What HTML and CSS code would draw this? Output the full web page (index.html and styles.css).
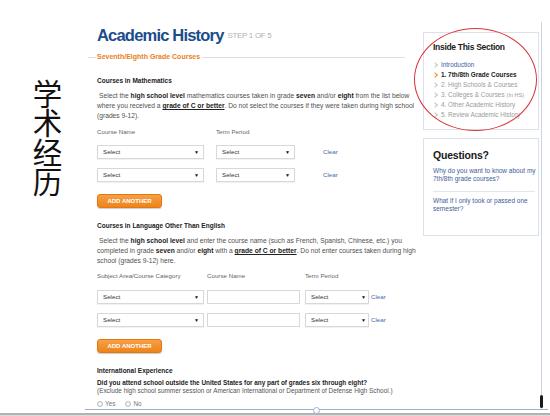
FILE: index.html
```html
<!DOCTYPE html>
<html>
<head>
<meta charset="utf-8">
<title>Academic History</title>
<link rel="stylesheet" href="styles.css">
</head>
<body>
<div class="slide">
  <div class="stage">
    <div class="cn"><span class="cn-text">学术经历</span></div>
    <div class="screen">
      <main class="main">
        <h1 class="title">Academic History <span class="step">STEP 1 OF 5</span></h1>
        <div class="sec-head"><span>Seventh/Eighth Grade Courses</span></div>

        <h2 class="h">Courses in Mathematics</h2>
        <p class="para">Select the <b>high school level</b> mathematics courses taken in grade <b>seven</b> and/or <b>eight</b> from the list below<br>where you received a <b class="u">grade of C or better</b>. Do not select the courses if they were taken during high school<br>(grades 9-12).</p>
        <div class="grid math labels"><span>Course Name</span><span>Term Period</span></div>
        <div class="grid math row">
          <div class="sel s-course">Select<i>▼</i></div>
          <div class="sel s-term">Select<i>▼</i></div>
          <a class="clear">Clear</a>
        </div>
        <div class="grid math row">
          <div class="sel s-course">Select<i>▼</i></div>
          <div class="sel s-term">Select<i>▼</i></div>
          <a class="clear">Clear</a>
        </div>
        <div class="btn">ADD ANOTHER</div>

        <h2 class="h h2">Courses in Language Other Than English</h2>
        <p class="para">Select the <b>high school level</b> and enter the course name (such as French, Spanish, Chinese, etc.) you<br>completed in grade <b>seven</b> and/or <b>eight</b> with a <b class="u">grade of C or better</b>. Do not enter courses taken during high<br>school (grades 9-12) here.</p>
        <div class="grid lang labels lang-labels"><span>Subject Area/Course Category</span><span>Course Name</span><span>Term Period</span></div>
        <div class="grid lang row">
          <div class="sel s-subj">Select<i>▼</i></div>
          <div class="input"></div>
          <div class="sel s-lterm">Select<i>▼</i></div>
          <a class="clear">Clear</a>
        </div>
        <div class="grid lang row">
          <div class="sel s-subj">Select<i>▼</i></div>
          <div class="input"></div>
          <div class="sel s-lterm">Select<i>▼</i></div>
          <a class="clear">Clear</a>
        </div>
        <div class="btn">ADD ANOTHER</div>

        <h2 class="h h2">International Experience</h2>
        <p class="q"><b>Did you attend school outside the United States for any part of grades six through eight?</b><br>(Exclude high school summer session or American International or Department of Defense High School.)</p>
        <div class="radios">
          <label class="radio"><span class="dot"></span>Yes</label>
          <label class="radio"><span class="dot"></span>No</label>
        </div>
      </main>

      <aside class="side">
        <div class="box box-nav">
          <h3 class="box-title">Inside This Section</h3>
          <ul class="nav">
            <li class="link">Introduction</li>
            <li class="active">1. 7th/8th Grade Courses</li>
            <li>2. High Schools &amp; Courses</li>
            <li>3. Colleges &amp; Courses <small>(In HS)</small></li>
            <li>4. Other Academic History</li>
            <li>5. Review Academic History</li>
          </ul>
        </div>
        <div class="box box-q">
          <h3 class="box-title q-title">Questions?</h3>
          <a class="qlink first">Why do you want to know about my<br>7th/8th grade courses?</a>
          <div class="sep"></div>
          <a class="qlink">What if I only took or passed one<br>semester?</a>
        </div>
      </aside>
    </div>
  </div>
  <div class="baseline"></div>
  <div class="edge"></div>
  <div class="ring"></div>
</div>
</body>
</html>
```

FILE: styles.css
```css
* { box-sizing: border-box; margin: 0; padding: 0; }

html, body {
  width: 550px;
  height: 416px;
  overflow: hidden;
  background: #fff;
}

body {
  font-family: "Liberation Sans", Arial, sans-serif;
  font-size: 7px;
  line-height: 10px;
  color: #555;
}

.slide {
  position: relative;
  width: 550px;
  height: 416px;
  display: flex;
  flex-direction: column;
}

.stage {
  display: flex;
  height: 409px;
}

/* Chinese vertical caption */
.cn {
  width: 88px;
  padding: 79px 0 0 7px;
  display: flex;
  justify-content: center;
  align-items: flex-start;
}

.cn-text {
  writing-mode: vertical-rl;
  font-family: "Noto Sans CJK SC", sans-serif;
  font-size: 29.5px;
  line-height: 32px;
  color: #111;
}

/* screenshot frame */
.screen {
  position: relative;
  margin-top: 22px;
  width: 454px;
  height: 387px;
  border-right: 1px solid #cbd4e4;
  display: flex;
}

.screen::after {
  content: "";
  position: absolute;
  right: -2px;
  bottom: 1px;
  width: 3px;
  height: 13px;
  border-radius: 2px;
  background: #1a1a1a;
}

.main {
  width: 317px;
  padding: 3px 0 0 9px;
}

.title {
  font-size: 16.5px;
  line-height: 20px;
  letter-spacing: -0.8px;
  font-weight: bold;
  color: #1b4c8b;
  white-space: nowrap;
}

.step {
  font-size: 8px;
  letter-spacing: -0.3px;
  font-weight: normal;
  color: #b3b3b3;
  vertical-align: 3px;
}

.sec-head {
  margin: 6px 0 0 -9px;
  height: 10px;
  display: flex;
  align-items: center;
  white-space: nowrap;
}

.sec-head::before,
.sec-head::after {
  content: "";
  height: 1px;
  background: #d9e0ec;
}

.sec-head::before { width: 8px; }
.sec-head::after { flex: 1; }

.sec-head span {
  padding: 0 2px 0 1px;
  font-size: 7px;
  font-weight: bold;
  color: #e8801a;
}

.h {
  margin-top: 14px;
  font-size: 6.5px;
  font-weight: bold;
  color: #222;
}

.h2 { margin-top: 13px; }

.para {
  margin-top: 5px;
  text-indent: 2px;
  font-size: 6.7px;
  color: #505050;
  white-space: nowrap;
}

.para b, .q b { color: #222; }
.u { text-decoration: underline; }

.grid {
  display: grid;
  align-items: center;
}

.math { grid-template-columns: 119px 107px auto; }
.lang { grid-template-columns: 110px 98px 66px auto; }

.labels {
  margin-top: 6px;
  font-size: 6.2px;
  color: #666;
}

.lang-labels { margin-top: 5px; }

.row { margin-top: 8px; }
.row + .row { margin-top: 9px; }
.lang.row { margin-top: 9px; }

.sel {
  height: 14px;
  border: 1px solid #d8d8d8;
  background: #fff;
  box-shadow: 0 1px 1px rgba(0, 0, 0, 0.05);
  display: flex;
  align-items: center;
  justify-content: space-between;
  padding: 0 4px 0 5px;
  font-size: 6.2px;
  color: #333;
}

.sel i {
  font-style: normal;
  font-size: 5px;
  color: #111;
}

.s-course { width: 107px; }
.s-term { width: 79px; }
.s-subj { width: 107px; }
.s-lterm { width: 64px; padding-right: 2px; }

.input {
  width: 93px;
  height: 14px;
  border: 1px solid #d8d8d8;
  background: #fff;
}

.clear {
  font-size: 6.2px;
  color: #4a6aa8;
}

.btn {
  margin-top: 12px;
  width: 65px;
  height: 14px;
  border: 1px solid #e27813;
  border-radius: 3px;
  background: linear-gradient(#f7a045, #ef8319);
  box-shadow: 0 1px 1px rgba(0, 0, 0, 0.2);
  color: #fff;
  font-weight: bold;
  font-size: 6px;
  display: flex;
  align-items: center;
  justify-content: center;
}

.q {
  margin-top: 3px;
  font-size: 6.4px;
  line-height: 8px;
  white-space: nowrap;
}

.radios {
  margin-top: 4px;
  display: flex;
  gap: 10px;
  font-size: 6.4px;
  color: #777;
}

.radio {
  display: flex;
  align-items: center;
  gap: 2px;
}

.dot {
  width: 6px;
  height: 6px;
  border: 1px solid #bcbcbc;
  border-radius: 50%;
  background: radial-gradient(#fff, #e6e6e6);
}

/* sidebar */
.side {
  margin-left: 18px;
  width: 116px;
  padding-top: 10px;
}

.box {
  height: 98px;
  border: 1px solid #dde2ea;
  padding: 8px 3px 0 9px;
}

.box-q {
  margin-top: 8px;
  padding-top: 10px;
}

.box-title {
  font-size: 8.5px;
  line-height: 12px;
  letter-spacing: -0.3px;
  font-weight: bold;
  color: #1a1a1a;
  white-space: nowrap;
}

.q-title {
  font-size: 10.5px;
  letter-spacing: -0.2px;
}

.nav {
  list-style: none;
  margin-top: 7px;
  font-size: 6.4px;
  color: #9a9a9a;
  white-space: nowrap;
}

.nav li {
  display: flex;
  align-items: center;
}

.nav li::before {
  content: "";
  width: 3px;
  height: 3px;
  margin: 0 4px 0 0;
  border-top: 1px solid #c4c4c4;
  border-right: 1px solid #c4c4c4;
  transform: rotate(45deg);
}

.nav small { font-size: 5.5px; margin-left: 2px; }

.nav .link { color: #3d62a6; }

.nav .active {
  color: #1a1a1a;
  font-weight: bold;
}

.nav .active::before {
  border-color: #ee8a1e;
  border-width: 1.5px;
}

.qlink {
  display: block;
  font-size: 6.5px;
  color: #3e5c9a;
  line-height: 8px;
  margin-top: 5px;
  white-space: nowrap;
}

.qlink.first { margin-top: 6px; }

.sep {
  margin-top: 8px;
  height: 1px;
  background: #e3e6eb;
}

/* bottom of the photographed screen */
.baseline {
  position: relative;
  margin-left: 85px;
  width: 463px;
  height: 1px;
  background: #9fb0cc;
}

.baseline::after {
  content: "";
  position: absolute;
  left: 228px;
  top: -2px;
  width: 5px;
  height: 5px;
  border: 1px solid #9fb0cc;
  border-radius: 50%;
  background: #fff;
}

.edge {
  margin-top: 3px;
  height: 3px;
  background: #b2b2b2;
  border-bottom: 1px solid #dcdcdc;
}

/* red annotation ellipse */
.ring {
  position: absolute;
  left: 414px;
  top: 28px;
  width: 123px;
  height: 103px;
  border: 1.5px solid #d8343c;
  border-radius: 50%;
}
```
